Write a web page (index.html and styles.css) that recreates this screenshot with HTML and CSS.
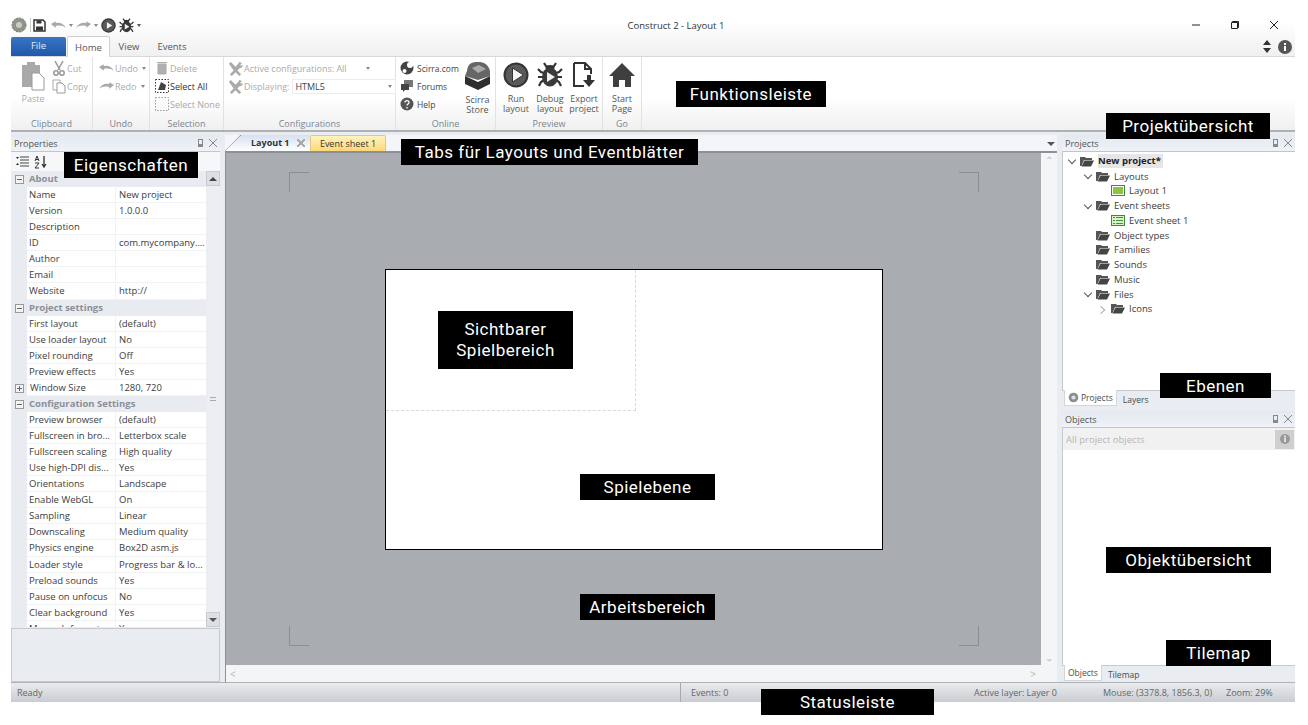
FILE: index.html
```html
<!DOCTYPE html>
<html lang="de">
<head>
<meta charset="UTF-8" />
<title>Construct 2 - Layout 1</title>
<link rel="stylesheet" href="styles.css">
</head>
<body>

<svg class="defs" width="0" height="0">
  <symbol id="folder" viewBox="0 0 14 11">
    <path d="M0 1h5l1 1h6v2H4L1.500 10H0z" fill="#555"/>
    <path d="M4.500 4.500H14L11 10.500H1.500z" fill="#444"/>
  </symbol>
  <symbol id="wrench" viewBox="0 0 16 16">
    <path d="M1 3l2-2 5 5 3-3 1-2 3 1-2 2 1 1 2-1-1 3-3 1-2 2 4 4-2 2-4-4-4 4-2-2 4-4z" fill="#aaa"/>
  </symbol>
  <symbol id="arrow-undo" viewBox="0 0 16 10">
    <path d="M0 4l5-3v2c4-1 8 0 11 5-3-2-6-3-11-2v2z" fill="#a8a8a8"/>
  </symbol>
  <symbol id="arrow-redo" viewBox="0 0 16 10">
    <path d="M16 4l-5-3v2C7 2 3 3 0 8c3-2 6-3 11-2v2z" fill="#a8a8a8"/>
  </symbol>
  <symbol id="play" viewBox="0 0 26 26">
    <circle cx="13" cy="13" r="12.500" fill="#333"/>
    <circle cx="13" cy="13" r="10.500" fill="#5a5a5a"/>
    <path d="M9.500 6l11 7-11 7z" fill="#f4f4f4" stroke="#333"/>
  </symbol>
  <symbol id="bug" viewBox="0 0 26 26">
    <path d="M7 1l2 3 2 2M19 1l-2 3-2 2M1 7l3 3 3 1M25 7l-3 3-3 1M1 15h5M25 15h-5M2 24l2-4 3-2M24 24l-2-4-3-2" stroke="#333" stroke-width="2.200" fill="none"/>
    <ellipse cx="13" cy="6" rx="4.500" ry="3" fill="#333"/>
    <ellipse cx="13" cy="15" rx="8" ry="9.500" fill="#3a3a3a"/>
    <path d="M10 10l8 5-8 5z" fill="#f0f0f0"/>
  </symbol>
</svg>

<div class="app">

  <header class="titlebar">
    <div class="quick">
      <svg class="gear" width="16" height="16" viewBox="0 0 16 16"><circle cx="8" cy="8" r="7" fill="#8f9488" stroke="#777" stroke-dasharray="2 1"/><circle cx="8" cy="8" r="3" fill="#c9ccc5"/></svg>
      <span class="sep"></span>
      <svg class="save" width="13" height="13" viewBox="0 0 13 13"><path d="M1 1h9l2 2v9H1z" fill="none" stroke="#333" stroke-width="1.500"/><path d="M3.500 1.500h5v3h-5zM3 7.500h7v4H3z" fill="#333"/></svg>
      <svg width="15" height="10"><use href="#arrow-undo"/></svg>
      <span class="caret"></span>
      <svg width="15" height="10"><use href="#arrow-redo"/></svg>
      <span class="caret"></span>
      <svg width="15" height="15"><use href="#play"/></svg>
      <svg width="15" height="15"><use href="#bug"/></svg>
      <span class="caret dark"></span>
    </div>
    <div class="title">Construct 2 - Layout 1</div>
    <div class="winbtns">
      <svg width="10" height="10" viewBox="0 0 10 10"><path d="M1 5h8" stroke="#222"/></svg>
      <svg width="10" height="10" viewBox="0 0 10 10"><path d="M2.500 2.500V1.500h6v6h-1M1.500 2.500h6v6h-6z" fill="none" stroke="#222"/></svg>
      <svg width="10" height="10" viewBox="0 0 10 10"><path d="M1 1l8 8M9 1l-8 8" stroke="#222"/></svg>
    </div>
  </header>

  <nav class="tabstrip">
    <div class="file-tab">File</div>
    <div class="rtab active">Home</div>
    <div class="rtab">View</div>
    <div class="rtab">Events</div>
    <div class="strip-right">
      <svg width="10" height="13" viewBox="0 0 10 13"><path d="M5 0l4 5H1zM5 13L1 8h8z" fill="#333"/></svg>
      <svg width="14" height="14" viewBox="0 0 14 14"><circle cx="7" cy="7" r="7" fill="#555"/><path d="M6 6h2v5H6zM6 3h2v2H6z" fill="#fff"/></svg>
    </div>
  </nav>

  <section class="ribbon">
    <div class="group g-clip">
      <div class="group-body">
        <div class="big disabled paste">
          <svg width="24" height="30" viewBox="0 0 24 30"><path d="M1 4h5V1h8v3h5v22H1z" fill="#a9a9a9"/><path d="M11 12h7l5 5v12H11z" fill="#fff" stroke="#999"/></svg>
          <span>Paste</span>
        </div>
        <div class="col">
          <div class="small disabled"><svg width="14" height="15" viewBox="0 0 14 15"><path d="M3 0l5 9M11 0L6 9" stroke="#999" stroke-width="1.500"/><circle cx="4" cy="12" r="2.200" fill="none" stroke="#999" stroke-width="1.500"/><circle cx="10" cy="12" r="2.200" fill="none" stroke="#999" stroke-width="1.500"/></svg>Cut</div>
          <div class="small disabled"><svg width="14" height="15" viewBox="0 0 14 15"><path d="M1 1h7v10H1z" fill="#fff" stroke="#aaa"/><path d="M5 4h5l3 3v7H5z" fill="#fff" stroke="#999"/></svg>Copy</div>
        </div>
      </div>
      <div class="caption">Clipboard</div>
    </div>
    <div class="group g-undo">
      <div class="group-body">
        <div class="col">
          <div class="small disabled"><svg width="15" height="10"><use href="#arrow-undo"/></svg>Undo<span class="caret"></span></div>
          <div class="small disabled"><svg width="15" height="10"><use href="#arrow-redo"/></svg>Redo<span class="caret"></span></div>
        </div>
      </div>
      <div class="caption">Undo</div>
    </div>
    <div class="group g-sel">
      <div class="group-body">
        <div class="col">
          <div class="small disabled"><svg width="14" height="14" viewBox="0 0 14 14"><path d="M3 3h8v10H3zM2 1.500h10" fill="#b0b0b0" stroke="#aaa"/></svg>Delete</div>
          <div class="small"><svg width="14" height="14" viewBox="0 0 14 14"><path d="M.5.500h13v13H.5z" fill="none" stroke="#333" stroke-dasharray="1.500 1.500"/><path d="M3 11l3-8 5 3-1 5z" fill="#444"/></svg>Select All</div>
          <div class="small disabled"><svg width="14" height="14" viewBox="0 0 14 14"><path d="M.5.500h13v13H.5z" fill="none" stroke="#999" stroke-dasharray="1.500 1.500"/></svg>Select None</div>
        </div>
      </div>
      <div class="caption">Selection</div>
    </div>
    <div class="group g-conf">
      <div class="group-body">
        <div class="col">
          <div class="small disabled"><svg width="15" height="15"><use href="#wrench"/></svg>Active configurations: All<span class="caret conf-caret"></span></div>
          <div class="small disabled"><svg width="15" height="15"><use href="#wrench"/></svg>Displaying:<span class="select">HTML5<span class="caret"></span></span></div>
        </div>
      </div>
      <div class="caption">Configurations</div>
    </div>
    <div class="group g-online">
      <div class="group-body">
        <div class="col online-col">
          <div class="small online"><svg width="14" height="14" viewBox="0 0 14 14"><circle cx="7" cy="7" r="6.500" fill="#444"/><circle cx="10" cy="4" r="3" fill="#fff"/><circle cx="4.500" cy="10" r="2" fill="#fff"/></svg>Scirra.com</div>
          <div class="small online"><svg width="14" height="14" viewBox="0 0 14 14"><path d="M4 1h9v7H9l-2 2V8H4z" fill="#777"/><path d="M1 5h8v6H5l-2 2v-2H1z" fill="#444"/></svg>Forums</div>
          <div class="small online"><svg width="14" height="14" viewBox="0 0 14 14"><circle cx="7" cy="7" r="6.500" fill="#555"/><path d="M5 5.500C5 3 9 3 9 5.500 9 7 7 7 7 8.500M7 10v1.500" fill="none" stroke="#fff" stroke-width="1.300"/></svg>Help</div>
        </div>
        <div class="big store">
          <svg width="27" height="28" viewBox="0 0 27 28"><path d="M3 9C4 1 8 0 14 0s10 2 12 9v5L14 18 1 14z" fill="#666"/><path d="M1 14l13 6 12-6v8l-12 6-13-6z" fill="#2f2f2f"/><path d="M8 6l7-3 7 4-8 4z" fill="#aaa"/></svg>
          <span>Scirra<br>Store</span>
        </div>
      </div>
      <div class="caption">Online</div>
    </div>
    <div class="group g-prev">
      <div class="group-body">
        <div class="big run"><svg width="26" height="26"><use href="#play"/></svg><span>Run<br>layout</span></div>
        <div class="big debug"><svg width="26" height="26"><use href="#bug"/></svg><span>Debug<br>layout</span></div>
        <div class="big export">
          <svg width="24" height="26" viewBox="0 0 24 26"><path d="M2 1h11l6 6v5M12 24H2V1M13 1v6h6" fill="none" stroke="#333" stroke-width="2"/><path d="M15 13h4v5h4l-6 7-6-7h4z" fill="#333"/></svg>
          <span>Export<br>project</span>
        </div>
      </div>
      <div class="caption">Preview</div>
    </div>
    <div class="group g-go">
      <div class="group-body">
        <div class="big start">
          <svg width="26" height="26" viewBox="0 0 26 26"><path d="M13 1l13 13h-4v11h-6v-7h-6v7H4V14H0z" fill="#3f3f3f"/></svg>
          <span>Start<br>Page</span>
        </div>
      </div>
      <div class="caption">Go</div>
    </div>
  </section>

  <main class="workspace">

    <aside class="panel props">
      <div class="panel-head">Properties<span class="head-btns"><i class="pin"></i><i class="shut"></i></span></div>
      <div class="props-tools">
        <svg width="13" height="12" viewBox="0 0 13 12"><path d="M4 1h9M4 4h9M4 7h9M4 10h9" stroke="#444"/><path d="M0 1h3L1.500 3zM0 9h3L1.500 7z" fill="#222"/></svg>
        <svg width="14" height="14" viewBox="0 0 14 14"><path d="M10 1v10M8 9l2 3 2-3" stroke="#333" fill="none" stroke-width="1.300"/><path d="M1 6l2-5 2 5M2 4.500h2M1 8h4L1 13h4" stroke="#333" fill="none"/></svg>
      </div>
      <div class="grid-wrap">
        <div class="grid">
          <div class="row head"><i class="box"></i>About</div>
          <div class="row"><span>Name</span><span>New project</span></div>
          <div class="row"><span>Version</span><span>1.0.0.0</span></div>
          <div class="row"><span>Description</span><span></span></div>
          <div class="row"><span>ID</span><span>com.mycompany....</span></div>
          <div class="row"><span>Author</span><span></span></div>
          <div class="row"><span>Email</span><span></span></div>
          <div class="row"><span>Website</span><span>http://</span></div>
          <div class="row head"><i class="box"></i>Project settings</div>
          <div class="row"><span>First layout</span><span>(default)</span></div>
          <div class="row"><span>Use loader layout</span><span>No</span></div>
          <div class="row"><span>Pixel rounding</span><span>Off</span></div>
          <div class="row"><span>Preview effects</span><span>Yes</span></div>
          <div class="row plus"><i class="box"></i><span>Window Size</span><span>1280, 720</span></div>
          <div class="row head"><i class="box"></i>Configuration Settings</div>
          <div class="row"><span>Preview browser</span><span>(default)</span></div>
          <div class="row"><span>Fullscreen in bro...</span><span>Letterbox scale</span></div>
          <div class="row"><span>Fullscreen scaling</span><span>High quality</span></div>
          <div class="row"><span>Use high-DPI dis...</span><span>Yes</span></div>
          <div class="row"><span>Orientations</span><span>Landscape</span></div>
          <div class="row"><span>Enable WebGL</span><span>On</span></div>
          <div class="row"><span>Sampling</span><span>Linear</span></div>
          <div class="row"><span>Downscaling</span><span>Medium quality</span></div>
          <div class="row"><span>Physics engine</span><span>Box2D asm.js</span></div>
          <div class="row"><span>Loader style</span><span>Progress bar &amp; lo...</span></div>
          <div class="row"><span>Preload sounds</span><span>Yes</span></div>
          <div class="row"><span>Pause on unfocus</span><span>No</span></div>
          <div class="row"><span>Clear background</span><span>Yes</span></div>
          <div class="row"><span>Mouse Informat</span><span>Yes</span></div>
        </div>
        <div class="vbar">
          <div class="vbtn"><span class="tri up"></span></div>
          <div class="vthumb"><span class="grip"></span></div>
          <div class="vbtn"><span class="tri down"></span></div>
        </div>
      </div>
      <div class="desc"></div>
    </aside>

    <section class="doc">
      <div class="doc-tabs">
        <div class="doc-tab current">
          <svg class="tab-slant" width="16" height="16" viewBox="0 0 16 16"><path d="M0 16L15 .5h1" fill="none" stroke="#8d9096"/></svg>
          Layout 1<span class="tab-x"></span>
        </div>
        <div class="doc-tab sheet">Event sheet 1</div>
        <span class="tri down doc-menu"></span>
      </div>
      <div class="doc-body">
        <div class="canvas-row">
          <div class="canvas">
            <i class="mark tl"></i><i class="mark tr"></i><i class="mark bl"></i><i class="mark br"></i>
            <div class="layout"><div class="viewport"></div></div>
          </div>
          <div class="doc-vbar"><span class="chev">&#8963;</span><span class="chev flip">&#8963;</span></div>
        </div>
        <div class="doc-hbar"><span class="chev-h">&lt;</span><span class="chev-h">&gt;</span></div>
      </div>
    </section>

    <aside class="panel right">
      <div class="project-pane">
        <div class="panel-head">Projects<span class="head-btns"><i class="pin"></i><i class="shut"></i></span></div>
        <div class="tree">
          <div class="node"><span class="tw open"></span><svg width="14" height="11"><use href="#folder"/></svg><b class="selected">New project*</b></div>
          <div class="node l1"><span class="tw open"></span><svg width="14" height="11"><use href="#folder"/></svg>Layouts</div>
          <div class="node l2"><svg width="14" height="11" viewBox="0 0 14 11"><rect x=".5" y=".5" width="13" height="10" fill="#fff" stroke="#3f8a3a"/><rect x="2" y="2" width="10" height="7" fill="#8cc63f"/></svg>Layout 1</div>
          <div class="node l1"><span class="tw open"></span><svg width="14" height="11"><use href="#folder"/></svg>Event sheets</div>
          <div class="node l2"><svg width="14" height="11" viewBox="0 0 14 11"><rect x=".5" y=".5" width="13" height="10" fill="#dff0c8" stroke="#3f8a3a"/><path d="M2 2.500h2M5 2.500h7M2 5.500h2M5 5.500h7M2 8.500h2M5 8.500h7" stroke="#2f9a3a"/></svg>Event sheet 1</div>
          <div class="node l1"><span class="tw"></span><svg width="14" height="11"><use href="#folder"/></svg>Object types</div>
          <div class="node l1"><span class="tw"></span><svg width="14" height="11"><use href="#folder"/></svg>Families</div>
          <div class="node l1"><span class="tw"></span><svg width="14" height="11"><use href="#folder"/></svg>Sounds</div>
          <div class="node l1"><span class="tw"></span><svg width="14" height="11"><use href="#folder"/></svg>Music</div>
          <div class="node l1"><span class="tw open"></span><svg width="14" height="11"><use href="#folder"/></svg>Files</div>
          <div class="node l3"><span class="tw shut-tw"></span><svg width="14" height="11"><use href="#folder"/></svg>Icons</div>
        </div>
        <div class="pane-tabs">
          <div class="pane-tab active"><svg width="11" height="11" viewBox="0 0 16 16"><circle cx="8" cy="8" r="7" fill="#8a8f96"/><circle cx="8" cy="8" r="3" fill="#dde"/></svg>Projects</div>
          <div class="pane-tab">Layers</div>
        </div>
      </div>
      <div class="object-pane">
        <div class="panel-head">Objects<span class="head-btns"><i class="pin"></i><i class="shut"></i></span></div>
        <div class="filter">All project objects<span class="filter-btn"><svg width="10" height="10" viewBox="0 0 10 10"><circle cx="5" cy="5" r="5" fill="#999"/><path d="M4 4h2v4H4zM4 1.500h2v2H4z" fill="#ddd"/></svg></span></div>
        <div class="obj-list"></div>
        <div class="pane-tabs short">
          <div class="pane-tab active">Objects</div>
          <div class="pane-tab">Tilemap</div>
        </div>
      </div>
    </aside>

  </main>

  <footer class="status">
    <span class="st-ready">Ready</span>
    <span class="st-events">Events: 0</span>
    <span class="st-layer">Active layer: Layer 0</span>
    <span class="st-mouse">Mouse: (3378.8, 1856.3, 0)</span>
    <span class="st-zoom">Zoom: 29%</span>
  </footer>
</div>

<!-- black captions on top of the screenshot -->
<div class="tag t-ribbon">Funktionsleiste</div>
<div class="tag t-project">Projektübersicht</div>
<div class="tag t-props">Eigenschaften</div>
<div class="tag t-tabs">Tabs für Layouts und Eventblätter</div>
<div class="tag t-view">Sichtbarer<br>Spielbereich</div>
<div class="tag t-layer">Spielebene</div>
<div class="tag t-work">Arbeitsbereich</div>
<div class="tag t-ebenen">Ebenen</div>
<div class="tag t-objects">Objektübersicht</div>
<div class="tag t-tilemap">Tilemap</div>
<div class="tag t-status">Statusleiste</div>

</body>
</html>
```

FILE: styles.css
```css
* {
  box-sizing: border-box;
}
html, body {
  margin: 0;
  height: 725px;
  overflow: hidden;
  background: #fff;
}
body {
  position: relative;
  font-family: "Open Sans", "Noto Sans", sans-serif;
  font-size: 9.5px;
  color: #444;
}
.defs {
  position: absolute;
}
.app {
  margin-left: 11px;
  width: 1284px;
  height: 702px;
  display: flex;
  flex-direction: column;
  background: #e9ecf0;
}

/* title bar */
.titlebar {
  height: 37px;
  flex: none;
  display: flex;
  align-items: flex-end;
  padding-bottom: 4px;
  position: relative;
  background: linear-gradient(#fff 60%, #f8f8f8);
}
.quick {
  display: flex;
  align-items: center;
  gap: 2px;
  height: 16px;
}
.quick svg {
  margin-left: 1px;
}
.quick .gear {
  margin: 0 1px 0 0;
}
.quick .save {
  margin-left: 0;
  margin-right: 2px;
}
.quick .sep {
  width: 1px;
  height: 14px;
  background: #ccc;
}
.quick .caret {
  margin-left: 1px;
}
.caret {
  display: inline-block;
  width: 0;
  height: 0;
  border: 2.5px solid transparent;
  border-top: 3px solid #888;
  border-bottom: 0;
  margin-left: 3px;
}
.caret.dark {
  border-top-color: #555;
}
.title {
  position: absolute;
  left: 0;
  width: 1330px;
  text-align: center;
  top: 19px;
  color: #333;
}
.winbtns {
  position: absolute;
  right: 16px;
  top: 20px;
  display: flex;
  gap: 29px;
}

/* ribbon tabs */
.tabstrip {
  height: 20px;
  flex: none;
  display: flex;
  align-items: flex-end;
  border-bottom: 1px solid #d8d8d8;
  background: linear-gradient(#f8f8f8, #f0f0f0);
  position: relative;
}
.file-tab {
  width: 55px;
  height: 19px;
  margin-right: 1px;
  align-self: flex-start;
  text-align: center;
  line-height: 17px;
  color: #e4ecf8;
  background: linear-gradient(#3b74c4, #1f58a8);
  border-radius: 2px 2px 0 0;
}
.rtab {
  width: 42px;
  height: 20px;
  text-align: center;
  line-height: 21px;
  color: #555;
  margin-right: 1px;
}
.rtab.active {
  width: 43px;
  background: #fff;
  border: 1px solid #d0d0d0;
  border-bottom: 0;
  border-radius: 2px 2px 0 0;
  margin-bottom: -1px;
  height: 21px;
  margin-right: -2px;
}
.strip-right {
  margin-left: auto;
  display: flex;
  gap: 6px;
  align-items: center;
  align-self: center;
  padding-right: 3px;
}

/* ribbon */
.ribbon {
  height: 75px;
  flex: none;
  display: flex;
  font-size: 9px;
  background: linear-gradient(#fff 55%, #f0f0f0);
  border-bottom: 2px solid #aeb1b5;
  margin-bottom: 3px;
}
.group {
  display: flex;
  flex-direction: column;
  border-right: 1px solid #e2e2e2;
}
.g-clip { width: 82px; }
.g-undo { width: 57px; }
.g-sel { width: 74px; }
.g-conf { width: 172px; }
.g-online { width: 100px; }
.g-prev { width: 107px; }
.g-go { width: 39px; }
.group-body {
  flex: 1;
  display: flex;
  padding: 2px 0 0 4px;
}
.caption {
  height: 13px;
  text-align: center;
  line-height: 13px;
  color: #7b8490;
}
.col {
  display: flex;
  flex-direction: column;
}
.small {
  height: 18px;
  display: flex;
  align-items: center;
  gap: 1px;
  color: #333;
  white-space: nowrap;
}
.small.disabled, .big.disabled {
  color: #aaa;
}
.online-col {
  width: 60px;
}
.online {
  gap: 3px;
  color: #444;
  font-size: 8.5px;
}
.big {
  display: flex;
  flex-direction: column;
  align-items: center;
  text-align: center;
  line-height: 10px;
  color: #555;
}
.big span {
  margin-top: 6px;
}
.paste {
  width: 32px;
  margin: 2px 3px 0 2px;
}
.paste span {
  margin-top: 3px;
}
.store {
  margin-left: 4px;
  margin-top: 3px;
}
.store span {
  margin-top: 5px;
}
.run { width: 34px; margin-top: 3px; margin-left: -1px; }
.debug { width: 34px; margin-top: 3px; }
.export { width: 34px; margin-top: 3px; }
.start { width: 32px; margin-top: 3px; margin-left: -1px; }
.g-undo .group-body {
  padding-left: 6px;
}
.g-sel .group-body {
  padding-left: 5px;
}
.conf-caret {
  margin-left: 18px;
}
.select {
  width: 104px;
  height: 15px;
  margin-left: 2px;
  padding: 0 3px 0 2px;
  background: #fff;
  border: 1px solid #ececec;
  color: #444;
  display: flex;
  align-items: center;
  justify-content: space-between;
}

/* panels */
.workspace {
  flex: 1;
  display: flex;
  min-height: 0;
  border-bottom: 1px solid #aeb1b5;
}
.panel {
  display: flex;
  flex-direction: column;
  flex: none;
}
.props {
  width: 209px;
}
.right {
  width: 233px;
  margin-left: 5px;
}
.panel-head {
  height: 17px;
  flex: none;
  display: flex;
  align-items: center;
  justify-content: space-between;
  padding: 0 3px;
  font-size: 9px;
  color: #555;
  background: linear-gradient(#e4e9f1, #eff2f7);
  border-bottom: 1px solid #c2c6cc;
}
.head-btns {
  display: flex;
  gap: 6px;
  align-items: center;
}
.pin {
  width: 5px;
  height: 8px;
  border: 1px solid #888;
  border-bottom-width: 3px;
}
.shut {
  width: 8px;
  height: 8px;
  background:
    linear-gradient(45deg, transparent 44%, #888 44%, #888 56%, transparent 56%),
    linear-gradient(-45deg, transparent 44%, #888 44%, #888 56%, transparent 56%);
}
.props-tools {
  height: 19px;
  flex: none;
  display: flex;
  align-items: center;
  gap: 5px;
  padding-left: 5px;
  background: #f6f7f9;
}
.grid-wrap {
  display: flex;
  height: 456px;
  flex: none;
  overflow: hidden;
  background: #fff;
}
.grid {
  width: 195px;
  flex: none;
}
.row {
  height: 16.07px;
  display: grid;
  grid-template-columns: 89px 1fr;
  margin-left: 16px;
  line-height: 16px;
  border-bottom: 1px solid #f1f2f4;
  box-shadow: -16px 0 0 #e8ebf0;
  color: #3c3c3c;
  white-space: nowrap;
}
.row span {
  padding-left: 3px;
  overflow: hidden;
}
.row span:first-child {
  padding-left: 2px;
  border-right: 1px solid #f1f2f4;
}
.row.head {
  display: block;
  margin-left: 0;
  box-shadow: none;
  background: #e8ebf0;
  border-bottom: 0;
  color: #8b8f96;
  font-weight: 700;
  padding-left: 18px;
  position: relative;
}
.row.plus {
  position: relative;
}
.box {
  position: absolute;
  left: 4px;
  top: 4px;
  width: 9px;
  height: 9px;
  border: 1px solid #999;
  background:
    linear-gradient(#666, #666) center / 5px 1px no-repeat,
    #f4f4f4;
}
.plus .box {
  left: -12px;
  background:
    linear-gradient(#666, #666) center / 5px 1px no-repeat,
    linear-gradient(#666, #666) center / 1px 5px no-repeat,
    #f4f4f4;
}
.vbar {
  width: 14px;
  flex: none;
  display: flex;
  flex-direction: column;
  background: #f0f2f5;
}
.vbtn {
  height: 15px;
  flex: none;
  display: flex;
  align-items: center;
  justify-content: center;
  background: #dcdfe3;
  border: 1px solid #c8cbd0;
}
.tri {
  width: 0;
  height: 0;
  border: 4px solid transparent;
}
.tri.up {
  border-top: 0;
  border-bottom: 4px solid #444;
}
.tri.down {
  border-bottom: 0;
  border-top: 4px solid #555;
}
.vthumb {
  flex: 1;
  display: flex;
  align-items: center;
  justify-content: center;
  background: #eceef1;
}
.grip {
  width: 6px;
  height: 4px;
  border-top: 1px solid #aaa;
  border-bottom: 1px solid #aaa;
}
.desc {
  margin-top: 1px;
  flex: 1;
  background: #e9ecf0;
  border: 1px solid #c6c9ce;
}

/* document area */
.doc {
  width: 832px;
  margin-left: 5px;
  flex: none;
  display: flex;
  flex-direction: column;
}
.doc-tabs {
  height: 18px;
  flex: none;
  display: flex;
  align-items: flex-end;
  background: #f4f5f8;
  position: relative;
  border-bottom: 2px solid #8d9096;
}
.doc-tab {
  height: 16px;
  line-height: 16px;
  white-space: nowrap;
  color: #333;
}
.current {
  width: 85px;
  padding-left: 26px;
  font-size: 9px;
  font-weight: 700;
  background: linear-gradient(#d5e0f2, #fff);
  clip-path: polygon(0 100%, 15px 0, 100% 0, 100% 100%);
  position: relative;
}
.tab-slant {
  position: absolute;
  left: 0;
  top: 0;
}
.tab-x {
  position: absolute;
  right: 5px;
  top: 4px;
  width: 8px;
  height: 8px;
  background:
    linear-gradient(45deg, transparent 42%, #aaa 42%, #aaa 58%, transparent 58%),
    linear-gradient(-45deg, transparent 42%, #aaa 42%, #aaa 58%, transparent 58%);
}
.sheet {
  width: 76px;
  text-align: center;
  font-size: 9px;
  background: linear-gradient(#fff3bd, #ffd877);
  border: 1px solid #dcc88a;
  border-bottom: 0;
  border-radius: 2px 2px 0 0;
}
.doc-menu {
  position: absolute;
  right: 2px;
  top: 7px;
}
.doc-body {
  flex: 1;
  display: flex;
  flex-direction: column;
  min-height: 0;
}
.canvas-row {
  flex: 1;
  display: flex;
  min-height: 0;
}
.canvas {
  flex: 1;
  position: relative;
  background: #a9acb1;
  border-left: 1px solid #8d9096;
}
.mark {
  position: absolute;
  width: 20px;
  height: 20px;
  border: 0 solid #8a8d92;
}
.tl { left: 63px; top: 19px; border-width: 1px 0 0 1px; }
.tr { left: 733px; top: 19px; border-width: 1px 1px 0 0; }
.bl { left: 63px; top: 473px; border-width: 0 0 1px 1px; }
.br { left: 733px; top: 473px; border-width: 0 1px 1px 0; }
.layout {
  position: absolute;
  left: 159px;
  top: 116px;
  width: 498px;
  height: 281px;
  background: #fff;
  border: 1px solid #000;
}
.viewport {
  width: 250px;
  height: 141px;
  border-right: 1px dashed #d8d8d8;
  border-bottom: 1px dashed #d8d8d8;
}
.doc-vbar {
  width: 16px;
  flex: none;
  display: flex;
  flex-direction: column;
  justify-content: space-between;
  align-items: center;
  background: #f4f5f7;
  padding: 2px 0;
}
.chev {
  color: #b5b5b5;
  line-height: 10px;
  font-size: 10px;
}
.flip {
  transform: scaleY(-1);
}
.doc-hbar {
  height: 17px;
  flex: none;
  display: flex;
  justify-content: space-between;
  align-items: center;
  padding: 0 21px 0 4px;
  background: #f4f5f7;
  border-left: 1px solid #8d9096;
  color: #b5b5b5;
}
.chev-h {
  font-size: 10px;
}

/* right column */
.project-pane {
  height: 274px;
  flex: none;
  display: flex;
  flex-direction: column;
}
.object-pane {
  flex: 1;
  display: flex;
  flex-direction: column;
  margin-top: 2px;
  min-height: 0;
}
.tree {
  flex: 1;
  background: #fff;
  border-left: 1px solid #c6c9ce;
  padding-top: 2px;
}
.node {
  height: 14.75px;
  display: flex;
  align-items: center;
  gap: 4px;
  color: #3c3c3c;
  padding-left: 4px;
}
.node b {
  color: #222;
}
.selected {
  background: #e6e6e6;
  height: 14px;
  line-height: 14px;
  padding-right: 2px;
}
.node.l1 { padding-left: 20px; }
.node.l2 { padding-left: 48px; }
.node.l3 { padding-left: 35px; }
.tw {
  width: 10px;
  height: 10px;
  flex: none;
  position: relative;
  margin-right: -1px;
}
.tw.open::before, .tw.shut-tw::before {
  content: "";
  position: absolute;
  width: 5px;
  height: 5px;
  border-right: 1px solid #555;
  border-bottom: 1px solid #555;
}
.tw.open::before {
  left: 2px;
  top: 1px;
  transform: rotate(45deg);
}
.tw.shut-tw::before {
  left: 0;
  top: 3px;
  border-color: #aaa;
  transform: rotate(-45deg);
}
.pane-tabs {
  height: 19px;
  flex: none;
  display: flex;
  align-items: flex-start;
  font-size: 8.5px;
  background: #e9ecf0;
  border-top: 1px solid #c6c9ce;
  padding-left: 2px;
}
.pane-tabs.short {
  height: 17px;
}
.pane-tab {
  height: 16px;
  padding: 0 6px;
  line-height: 15px;
  display: flex;
  align-items: center;
  gap: 2px;
  color: #4a4a4a;
}
.pane-tab.active {
  background: #fff;
  margin-top: -1px;
  border: 1px solid #d2d5da;
  border-top: 0;
  padding: 0 3px;
}
.filter {
  height: 22px;
  flex: none;
  display: flex;
  align-items: center;
  justify-content: space-between;
  padding: 0 1px 0 3px;
  background: #f1f1f1;
  color: #b6b6b6;
  border-left: 1px solid #c6c9ce;
}
.filter-btn {
  width: 19px;
  height: 19px;
  display: flex;
  align-items: center;
  justify-content: center;
  background: #cfcfcf;
}
.obj-list {
  flex: 1;
  background: #fff;
  border-left: 1px solid #c6c9ce;
}

/* status bar */
.status {
  height: 19px;
  flex: none;
  position: relative;
  font-size: 9px;
  background: linear-gradient(#e9ebee, #c9ccd1);
  color: #666;
  line-height: 19px;
}
.status span {
  position: absolute;
  top: 0;
  white-space: nowrap;
}
.st-ready { left: 6px; }
.st-events { left: 669px; padding-left: 10px; border-left: 1px solid #aaa; }
.st-layer { left: 963px; }
.st-mouse { left: 1092px; }
.st-zoom { left: 1215px; }

/* black captions */
.tag {
  position: absolute;
  background: #000;
  color: #fff;
  font-family: Roboto, "Noto Sans", sans-serif;
  font-size: 17px;
  letter-spacing: 0.5px;
  line-height: 26px;
  text-align: center;
}
.t-ribbon { left: 676px; top: 81px; width: 150px; height: 26px; }
.t-project { left: 1106px; top: 113px; width: 164px; height: 26px; }
.t-props { left: 64px; top: 152px; width: 134px; height: 26px; }
.t-tabs { left: 401px; top: 139px; width: 297px; height: 26px; }
.t-view { left: 438px; top: 311px; width: 135px; height: 58px; padding-top: 8px; line-height: 21px; }
.t-layer { left: 580px; top: 474px; width: 135px; height: 26px; }
.t-work { left: 580px; top: 594px; width: 135px; height: 26px; }
.t-ebenen { left: 1160px; top: 373px; width: 111px; height: 25px; }
.t-objects { left: 1106px; top: 547px; width: 165px; height: 26px; }
.t-tilemap { left: 1166px; top: 640px; width: 105px; height: 26px; }
.t-status { left: 761px; top: 689px; width: 173px; height: 26px; }
```
